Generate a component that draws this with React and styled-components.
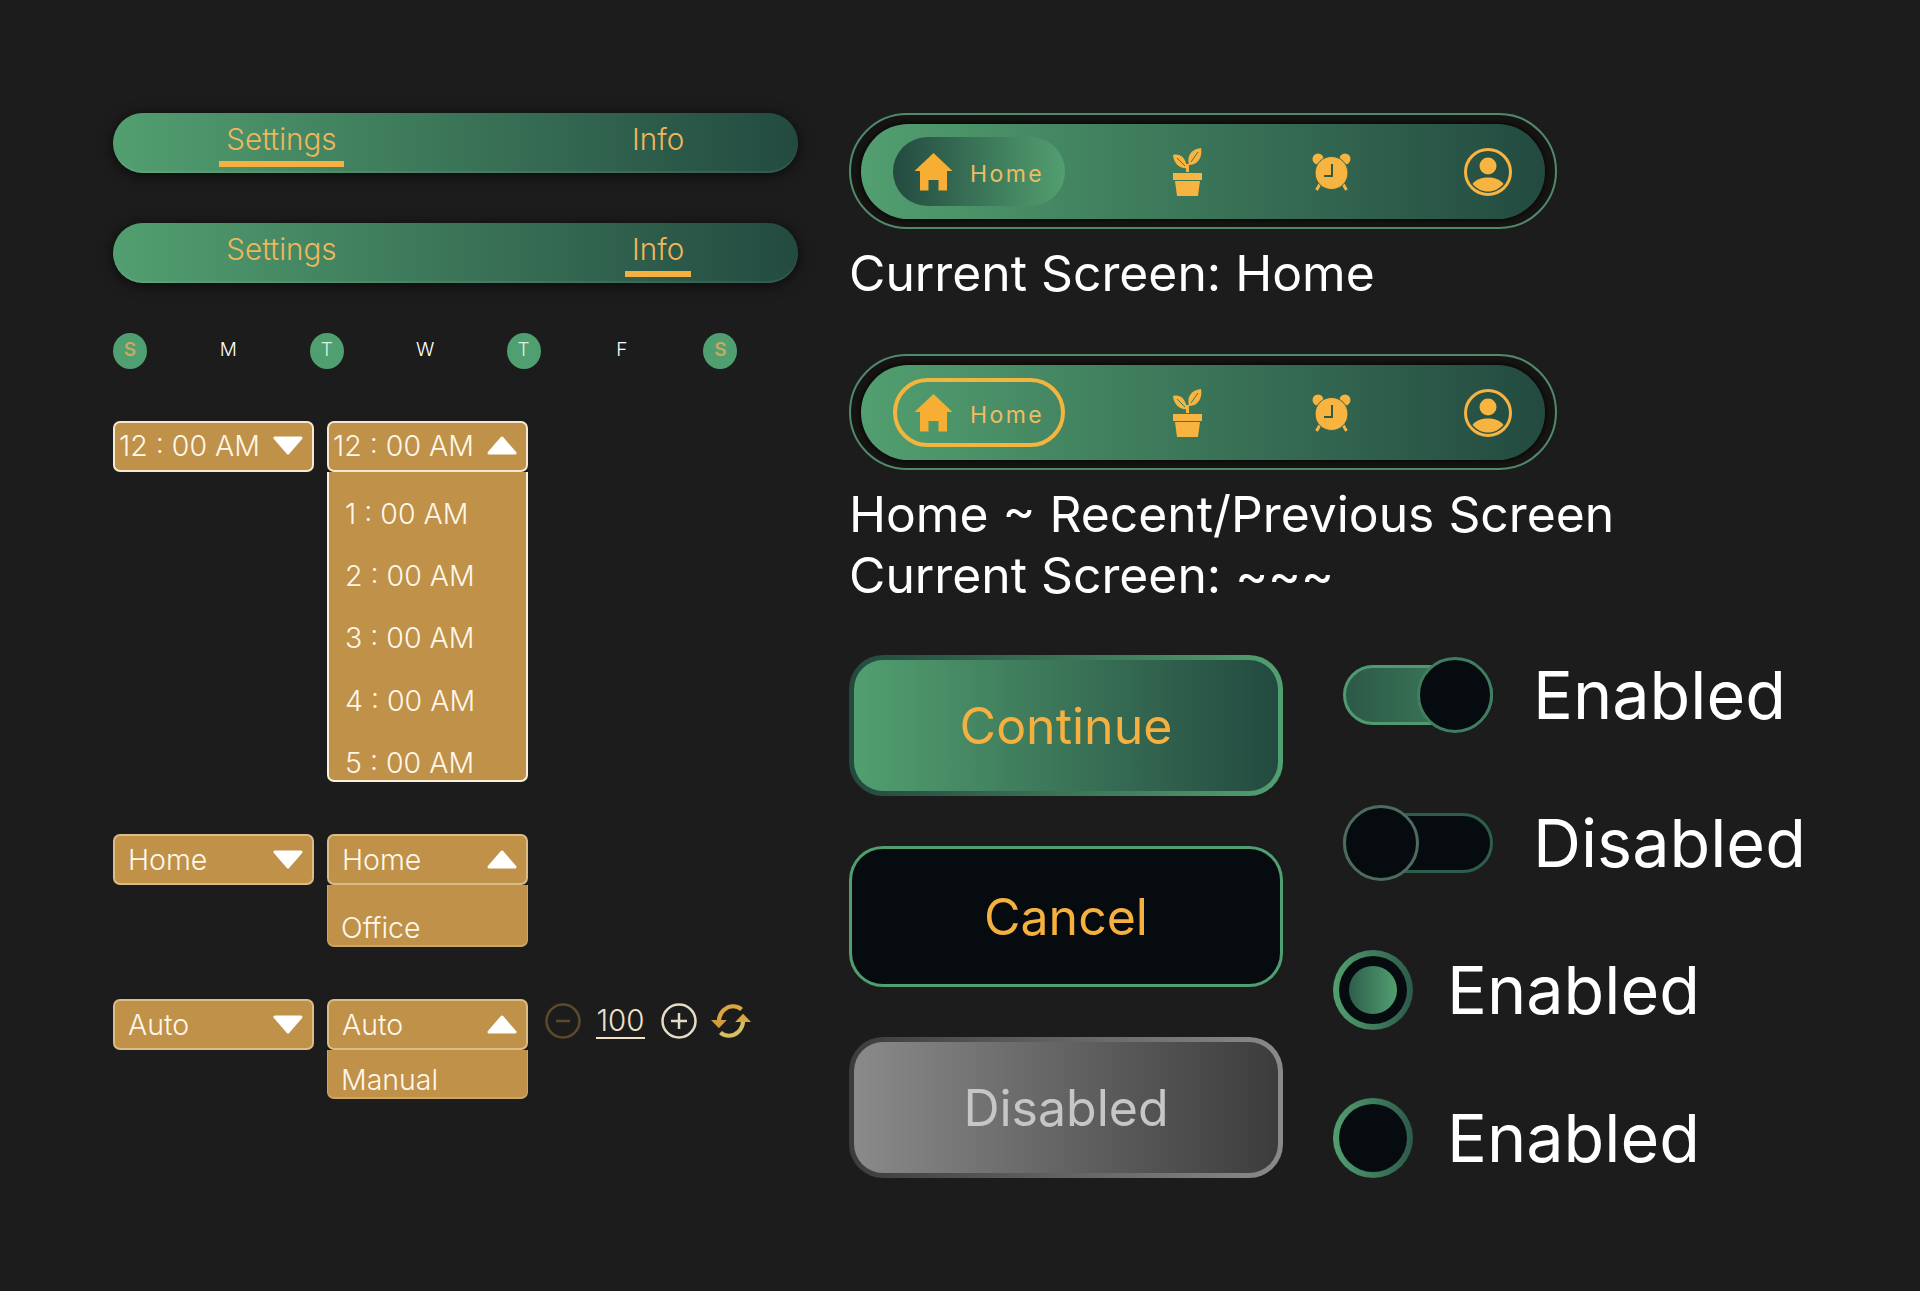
import styled, { createGlobalStyle } from "styled-components"

const GOLD = "#f6b03f"
const GREEN_LIGHT = "#529f70"
const GREEN_DARK = "#234a40"
const ICON_GOLD = "#f8b440"

const GlobalStyle = createGlobalStyle`
  html, body {
    margin: 0;
    background: #1c1c1c;
  }
  body {
    font-family: "Inter", "Liberation Sans", sans-serif;
    color: #fff;
  }
`

const Page = styled.div`
  width: 1920px;
  height: 1291px;
  box-sizing: border-box;
  padding: 113px 0 0 113px;
  display: flex;
  gap: 51px;
  overflow: hidden;
`

const LeftColumn = styled.div`
  width: 685px;
  flex: none;
  display: flex;
  flex-direction: column;
`

const RightColumn = styled.div`
  flex: none;
  width: 1000px;
  display: flex;
  flex-direction: column;
`

const TabBar = styled.div`
  height: 60px;
  box-sizing: border-box;
  padding-left: 106px;
  margin-bottom: 50px;
  border-radius: 30px;
  display: flex;
  gap: 281px;
  background: linear-gradient(90deg, ${GREEN_LIGHT}, ${GREEN_DARK});
  box-shadow: 0 2px 14px rgba(0, 0, 0, 0.65), inset 0 -2px 1px rgba(255, 255, 255, 0.08);
`

const Tab = styled.div`
  height: 54px;
  box-sizing: border-box;
  padding: 4px 7px 0;
  display: flex;
  align-items: center;
  justify-content: center;
  font-size: 29.6px;
  font-weight: 300;
  color: #f0b75a;
  border-bottom: 6px solid ${(p) => (p.$active ? GOLD : "transparent")};
  min-width: ${(p) => p.$width}px;
`

const DayRow = styled.div`
  display: grid;
  grid-template-columns: repeat(7, 34px);
  column-gap: 64.4px;
  margin-bottom: 52px;
`

const Day = styled.div`
  width: 34px;
  height: 36px;
  box-sizing: border-box;
  padding-bottom: 3px;
  border-radius: 50%;
  display: flex;
  align-items: center;
  justify-content: center;
  font-size: 19px;
  font-weight: ${(p) => p.$weight};
  color: ${(p) => p.$color};
  background: ${(p) => (p.$on ? "#4f9f70" : "transparent")};
`

const DropRow = styled.div`
  display: flex;
  align-items: flex-start;
  gap: 13px;
  margin-bottom: 52px;
`

const Drop = styled.div`
  width: 201px;
  flex: none;
`

const DropHead = styled.div`
  height: 51px;
  box-sizing: border-box;
  padding: 0 9px ${(p) => (p.$outlined ? 3 : 0)}px ${(p) => p.$pad}px;
  display: flex;
  align-items: center;
  justify-content: space-between;
  border-radius: 7px;
  border: 2px solid ${(p) => (p.$outlined ? "#f7e8cf" : "#dcbb84")};
  font-size: 28.5px;
  font-weight: 300;
  color: #fff8ea;
  background: #c09149;
`

const DropList = styled.div`
  height: ${(p) => p.$height}px;
  box-sizing: border-box;
  padding: ${(p) => p.$top}px 0 0 ${(p) => p.$pad}px;
  overflow: hidden;
  background: #c09149;
  border-radius: 0 0 7px 7px;
  border: solid ${(p) => (p.$outlined ? "#fbf0dc" : "#cfa566")};
  border-width: 0 ${(p) => (p.$outlined ? "2px 2px" : "1px 2px")};
`

const DropItem = styled.div`
  height: ${(p) => p.$rowHeight}px;
  display: flex;
  align-items: center;
  font-size: 28.5px;
  font-weight: 300;
  color: #fff8ea;
`

const Arrow = styled.svg`
  width: 30px;
  height: 19px;
  flex: none;
`

const Counter = styled.div`
  margin: 4px 0 0 4px;
  display: flex;
  align-items: center;
  height: 36px;
`

const CounterValue = styled.div`
  width: 49px;
  height: 35px;
  margin: 0 16px 0 15px;
  box-sizing: border-box;
  line-height: 33px;
  font-size: 29.5px;
  font-weight: 300;
  text-align: center;
  color: #efe3c9;
  border-bottom: 2px solid #efe3c9;
`

const RoundIcon = styled.svg`
  width: 36px;
  height: 36px;
  flex: none;
`

const RefreshIcon = styled.svg`
  width: 40px;
  height: 34px;
  margin-left: 14px;
  flex: none;
`

const NavRing = styled.div`
  width: 708px;
  height: 116px;
  box-sizing: border-box;
  padding: 9px 10px 8px;
  border-radius: 58px;
  border: 2px solid #4f8a6c;
  background: #171513;
`

const NavBar = styled.div`
  height: 95px;
  box-sizing: border-box;
  padding-left: 32px;
  border-radius: 48px;
  display: flex;
  align-items: center;
  background: linear-gradient(90deg, ${GREEN_LIGHT}, ${GREEN_DARK});
  box-shadow: 0 0 6px #000;
`

const HomePill = styled.div`
  width: 172px;
  height: 69px;
  box-sizing: border-box;
  padding-left: ${(p) => (p.$outlined ? 17 : 21)}px;
  border-radius: 35px;
  display: flex;
  align-items: center;
  gap: 17px;
  background: ${(p) =>
    p.$outlined ? "transparent" : `linear-gradient(90deg, ${GREEN_DARK}, ${GREEN_LIGHT})`};
  border: ${(p) => (p.$outlined ? "4px solid #f4b53f" : "none")};
`

const HomeLabel = styled.span`
  margin-top: 5px;
  font-size: 23px;
  letter-spacing: 2.4px;
  color: #ecbd62;
`

const NavIcon = styled.svg`
  flex: none;
  margin-left: ${(p) => p.$gap}px;
`

const Caption = styled.div`
  font-size: 49.8px;
  line-height: 61px;
  font-weight: 400;
  margin: ${(p) => p.$margin};
`

const Controls = styled.div`
  display: flex;
  gap: 50px;
`

const Buttons = styled.div`
  width: 434px;
  flex: none;
  display: flex;
  flex-direction: column;
  gap: 50px;
`

const ActionButton = styled.div`
  height: 141px;
  box-sizing: border-box;
  border-radius: 34px;
  display: flex;
  align-items: center;
  justify-content: center;
  font-size: 50px;
  color: ${(p) => p.$color};
  border: ${(p) => p.$border} solid transparent;
  background: ${(p) => p.$fill} padding-box, ${(p) => p.$edge} border-box;
`

const Options = styled.div`
  flex: none;
  display: flex;
  flex-direction: column;
  gap: 67.6px;
`

const OptionRow = styled.div`
  height: 80px;
  display: flex;
  align-items: center;
  gap: ${(p) => p.$gap}px;
  margin-left: ${(p) => p.$indent}px;
  font-size: 66.5px;
  font-weight: 400;
`

const Track = styled.div`
  position: relative;
  width: 150px;
  height: 60px;
  box-sizing: border-box;
  border-radius: 30px;
  border: 3px solid ${(p) => (p.$on ? "#4f9a70" : "#2f5d4b")};
  background: ${(p) => (p.$on ? "linear-gradient(90deg, #2d5947, #3f8260)" : "#060b0f")};
`

const Knob = styled.div`
  position: absolute;
  top: -11px;
  ${(p) => (p.$on ? "right: -3px;" : "left: -3px;")}
  width: 76px;
  height: 76px;
  box-sizing: border-box;
  border-radius: 50%;
  border: 3px solid ${(p) => (p.$on ? "#3f7f60" : "#4c6d5d")};
  background: #060b0f;
`

const Radio = styled.div`
  width: 80px;
  height: 80px;
  flex: none;
  box-sizing: border-box;
  border-radius: 50%;
  display: flex;
  align-items: center;
  justify-content: center;
  border: 6px solid transparent;
  background: linear-gradient(#060b0f, #060b0f) padding-box,
    linear-gradient(90deg, ${GREEN_LIGHT}, #2d5a4a) border-box;
`

const RadioDot = styled.div`
  width: 48px;
  height: 48px;
  border-radius: 50%;
  background: linear-gradient(90deg, #2f5d4c, ${GREEN_LIGHT});
`

const DownArrow = () => (
  <Arrow viewBox="0 0 30 19">
    <polygon points="2,2 28,2 15,17" fill="#fff" stroke="#fff" strokeWidth="3" strokeLinejoin="round" />
  </Arrow>
)

const UpArrow = () => (
  <Arrow viewBox="0 0 30 19">
    <polygon points="15,2 28,17 2,17" fill="#fff" stroke="#fff" strokeWidth="3" strokeLinejoin="round" />
  </Arrow>
)

const HouseIcon = styled.svg`
  flex: none;
`

const PlantIcon = () => (
  <NavIcon $gap={108} width="29" height="48" viewBox="0 0 29 48">
    <path d="M13 24 V16 H16 V24 Z" fill={ICON_GOLD} />
    <path d="M0 7 C6 5 13 9 14 20 C8 21 1 17 0 7 Z" fill={ICON_GOLD} />
    <path d="M28 0 C21 1 13 5 16 17 C23 17 30 11 28 0 Z" fill={ICON_GOLD} />
    <path d="M4 10 L12 18 M25 4 L18 14" stroke="#3d7a5a" strokeWidth="1" />
    <rect x="0" y="25" width="29" height="7" fill={ICON_GOLD} />
    <path d="M2 33 H27 L25 48 H4 Z" fill={ICON_GOLD} />
  </NavIcon>
)

const AlarmIcon = () => (
  <NavIcon $gap={110} width="39" height="38" viewBox="0 0 39 38">
    <circle cx="6" cy="6" r="5.5" fill={ICON_GOLD} />
    <circle cx="33" cy="6" r="5.5" fill={ICON_GOLD} />
    <path d="M8 31 L4.5 37 M31 31 L34.5 37" stroke={ICON_GOLD} strokeWidth="3" />
    <circle cx="19.5" cy="20" r="16.5" fill={ICON_GOLD} stroke="#33624e" strokeWidth="1" />
    <path d="M20 11 V23 H12" stroke="#2d5a45" strokeWidth="2" fill="none" />
  </NavIcon>
)

const UserIcon = () => (
  <NavIcon $gap={113} width="48" height="48" viewBox="0 0 48 48">
    <circle cx="24" cy="24" r="22.5" fill="none" stroke={ICON_GOLD} strokeWidth="3" />
    <circle cx="24" cy="18" r="8.5" fill={ICON_GOLD} />
    <path d="M8.5 36 C12 31 18 29.5 24 29.5 C30 29.5 36 31 39.5 36 C35 41 30 43.5 24 43.5 C18 43.5 13 41 8.5 36 Z" fill={ICON_GOLD} />
  </NavIcon>
)

const BottomNav = ({ outlined }) => (
  <NavRing>
    <NavBar>
      <HomePill $outlined={outlined}>
        <HouseIcon width="39" height="39" viewBox="0 0 39 39">
          <path d="M19.5 1 L38.5 19 H33 V38.5 H24.5 V28 H14.5 V38.5 H6 V19 H0.5 Z" fill="#f7ae35" />
        </HouseIcon>
        <HomeLabel>Home</HomeLabel>
      </HomePill>
      <PlantIcon />
      <AlarmIcon />
      <UserIcon />
    </NavBar>
  </NavRing>
)

const Dropdown = ({ label, open, pad, listPad, listHeight, listTop, rowHeight, items, outlined }) => (
  <Drop>
    <DropHead $pad={pad} $outlined={outlined}>
      {label}
      {open ? <UpArrow /> : <DownArrow />}
    </DropHead>
    {open && (
      <DropList $height={listHeight} $top={listTop} $pad={listPad} $outlined={outlined}>
        {items.map((item) => (
          <DropItem key={item} $rowHeight={rowHeight}>
            {item}
          </DropItem>
        ))}
      </DropList>
    )}
  </Drop>
)

const days = [
  { label: "S", on: true, color: "#c9a85f", weight: 600 },
  { label: "M", color: "#fff", weight: 300 },
  { label: "T", on: true, color: "#d9f3e3", weight: 300 },
  { label: "W", color: "#fff", weight: 300 },
  { label: "T", on: true, color: "#d9f3e3", weight: 300 },
  { label: "F", color: "#fff", weight: 300 },
  { label: "S", on: true, color: "#c9a85f", weight: 600 },
]

const hours = ["1 : 00 AM", "2 : 00 AM", "3 : 00 AM", "4 : 00 AM", "5 : 00 AM"]

const App = () => (
  <Page>
    <GlobalStyle />
    <LeftColumn>
      <TabBar>
        <Tab $active $width={125}>Settings</Tab>
        <Tab $width={65}>Info</Tab>
      </TabBar>
      <TabBar>
        <Tab $width={125}>Settings</Tab>
        <Tab $active $width={65}>Info</Tab>
      </TabBar>

      <DayRow>
        {days.map((day, i) => (
          <Day key={i} $on={day.on} $color={day.color} $weight={day.weight}>{day.label}</Day>
        ))}
      </DayRow>

      <DropRow>
        <Dropdown label="12 : 00 AM" pad={4} outlined />
        <Dropdown
          label="12 : 00 AM"
          pad={4}
          open
          outlined
          items={hours}
          listPad={16}
          listHeight={310}
          listTop={10}
          rowHeight={62.3}
        />
      </DropRow>

      <DropRow>
        <Dropdown label="Home" pad={13} />
        <Dropdown label="Home" pad={13} open items={["Office"]} listPad={13} listHeight={62} listTop={11} rowHeight={62} />
      </DropRow>

      <DropRow>
        <Dropdown label="Auto" pad={13} />
        <Dropdown label="Auto" pad={13} open items={["Manual"]} listPad={13} listHeight={49} listTop={0} rowHeight={58} />
        <Counter>
          <RoundIcon viewBox="0 0 36 36">
            <circle cx="18" cy="18" r="16.5" fill="none" stroke="#5c4a2b" strokeWidth="2.5" />
            <path d="M11 18 H25" stroke="#5c4a2b" strokeWidth="2.5" />
          </RoundIcon>
          <CounterValue>100</CounterValue>
          <RoundIcon viewBox="0 0 36 36">
            <circle cx="18" cy="18" r="16.5" fill="none" stroke="#e6dcc6" strokeWidth="2.5" />
            <path d="M10 18 H26 M18 10 V26" stroke="#e6dcc6" strokeWidth="2.5" />
          </RoundIcon>
          <RefreshIcon viewBox="0 0 38 32">
            <path d="M7.5 16 C8 7 15 2 21 2 C24 2 27 3 29 5" fill="none" stroke="#d9a63f" strokeWidth="4" />
            <path d="M30.5 16 C30 25 23 30 17 30 C14 30 11 29 9 27" fill="none" stroke="#d8c060" strokeWidth="4" />
            <polygon points="0,15 15,15 7.5,23" fill="#d39b3c" />
            <polygon points="23,17 38,17 30.5,9" fill="#d9a63f" />
          </RefreshIcon>
        </Counter>
      </DropRow>
    </LeftColumn>

    <RightColumn>
      <BottomNav />
      <Caption $margin="14px 0 50px">Current Screen: Home</Caption>
      <BottomNav outlined />
      <Caption $margin="14px 0 49px">
        Home ~ Recent/Previous Screen
        <br />
        Current Screen: ~~~
      </Caption>

      <Controls>
        <Buttons>
          <ActionButton
            $color={GOLD}
            $border="5px"
            $fill={`linear-gradient(90deg, ${GREEN_LIGHT}, ${GREEN_DARK})`}
            $edge={`linear-gradient(90deg, #24493f, ${GREEN_LIGHT})`}
          >
            Continue
          </ActionButton>
          <ActionButton $color={GOLD} $border="3px" $fill="linear-gradient(#060b0f, #060b0f)" $edge="linear-gradient(#4f9f70, #4f9f70)">
            Cancel
          </ActionButton>
          <ActionButton
            $color="#c6c6c6"
            $border="5px"
            $fill="linear-gradient(90deg, #8a8a8a, #3c3c3c)"
            $edge="linear-gradient(90deg, #3c3c3c, #8a8a8a)"
          >
            Disabled
          </ActionButton>
        </Buttons>

        <Options>
          <OptionRow $indent={10} $gap={40}>
            <Track $on>
              <Knob $on />
            </Track>
            Enabled
          </OptionRow>
          <OptionRow $indent={10} $gap={40}>
            <Track>
              <Knob />
            </Track>
            Disabled
          </OptionRow>
          <OptionRow $indent={0} $gap={34}>
            <Radio>
              <RadioDot />
            </Radio>
            Enabled
          </OptionRow>
          <OptionRow $indent={0} $gap={34}>
            <Radio />
            Enabled
          </OptionRow>
        </Options>
      </Controls>
    </RightColumn>
  </Page>
)

export default App
